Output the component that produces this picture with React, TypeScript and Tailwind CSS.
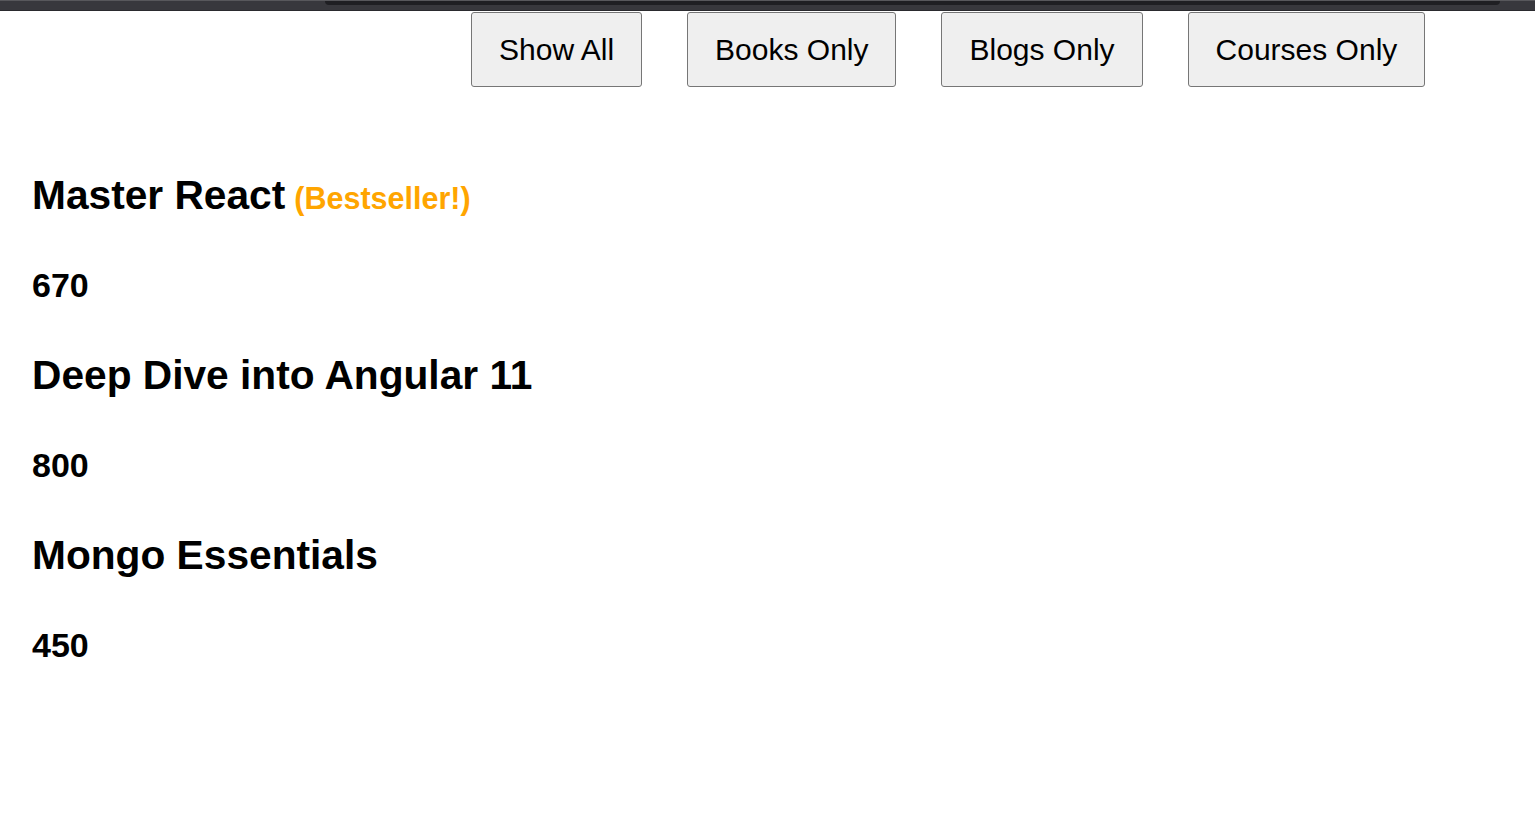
const filters = ["Show All", "Books Only", "Blogs Only", "Courses Only"];

const products = [
  { title: "Master React", price: 670, bestseller: true },
  { title: "Deep Dive into Angular 11", price: 800, bestseller: false },
  { title: "Mongo Essentials", price: 450, bestseller: false },
];

export default function App() {
  return (
    <div className="min-h-[824px] bg-white text-black font-['Liberation_Sans',Arial,sans-serif]">
      {/* leftover browser chrome strip */}
      <div className="h-[11px] bg-[#38383d] border-t border-[#58585c] border-b border-b-[#2a2a2e] flex">
        <div className="ml-[325px] w-[1175px] h-[4px] bg-[#1f1f23] rounded-b-[4px]" />
      </div>

      <div className="flex gap-[45px] pl-[471px] pt-[1px]">
        {filters.map((f) => (
          <button
            key={f}
            className="h-[75px] px-[27px] text-[30px] bg-[#efefef] border border-[#767676] rounded-[3px] text-black"
          >
            {f}
          </button>
        ))}
      </div>

      <div className="flex flex-col gap-[48px] pl-[32px] pt-[85px]">
        {products.map((p) => (
          <div key={p.title} className="flex flex-col gap-[48px]">
            <h1 className="text-[40.7px] leading-[46px] font-bold">
              {p.title}
              {p.bestseller && (
                <span className="text-[30.5px] leading-none text-[#ffa500] ml-[9px]">(Bestseller!)</span>
              )}
            </h1>
            <h2 className="text-[34px] leading-[38px] font-bold">{p.price}</h2>
          </div>
        ))}
      </div>
    </div>
  );
}
